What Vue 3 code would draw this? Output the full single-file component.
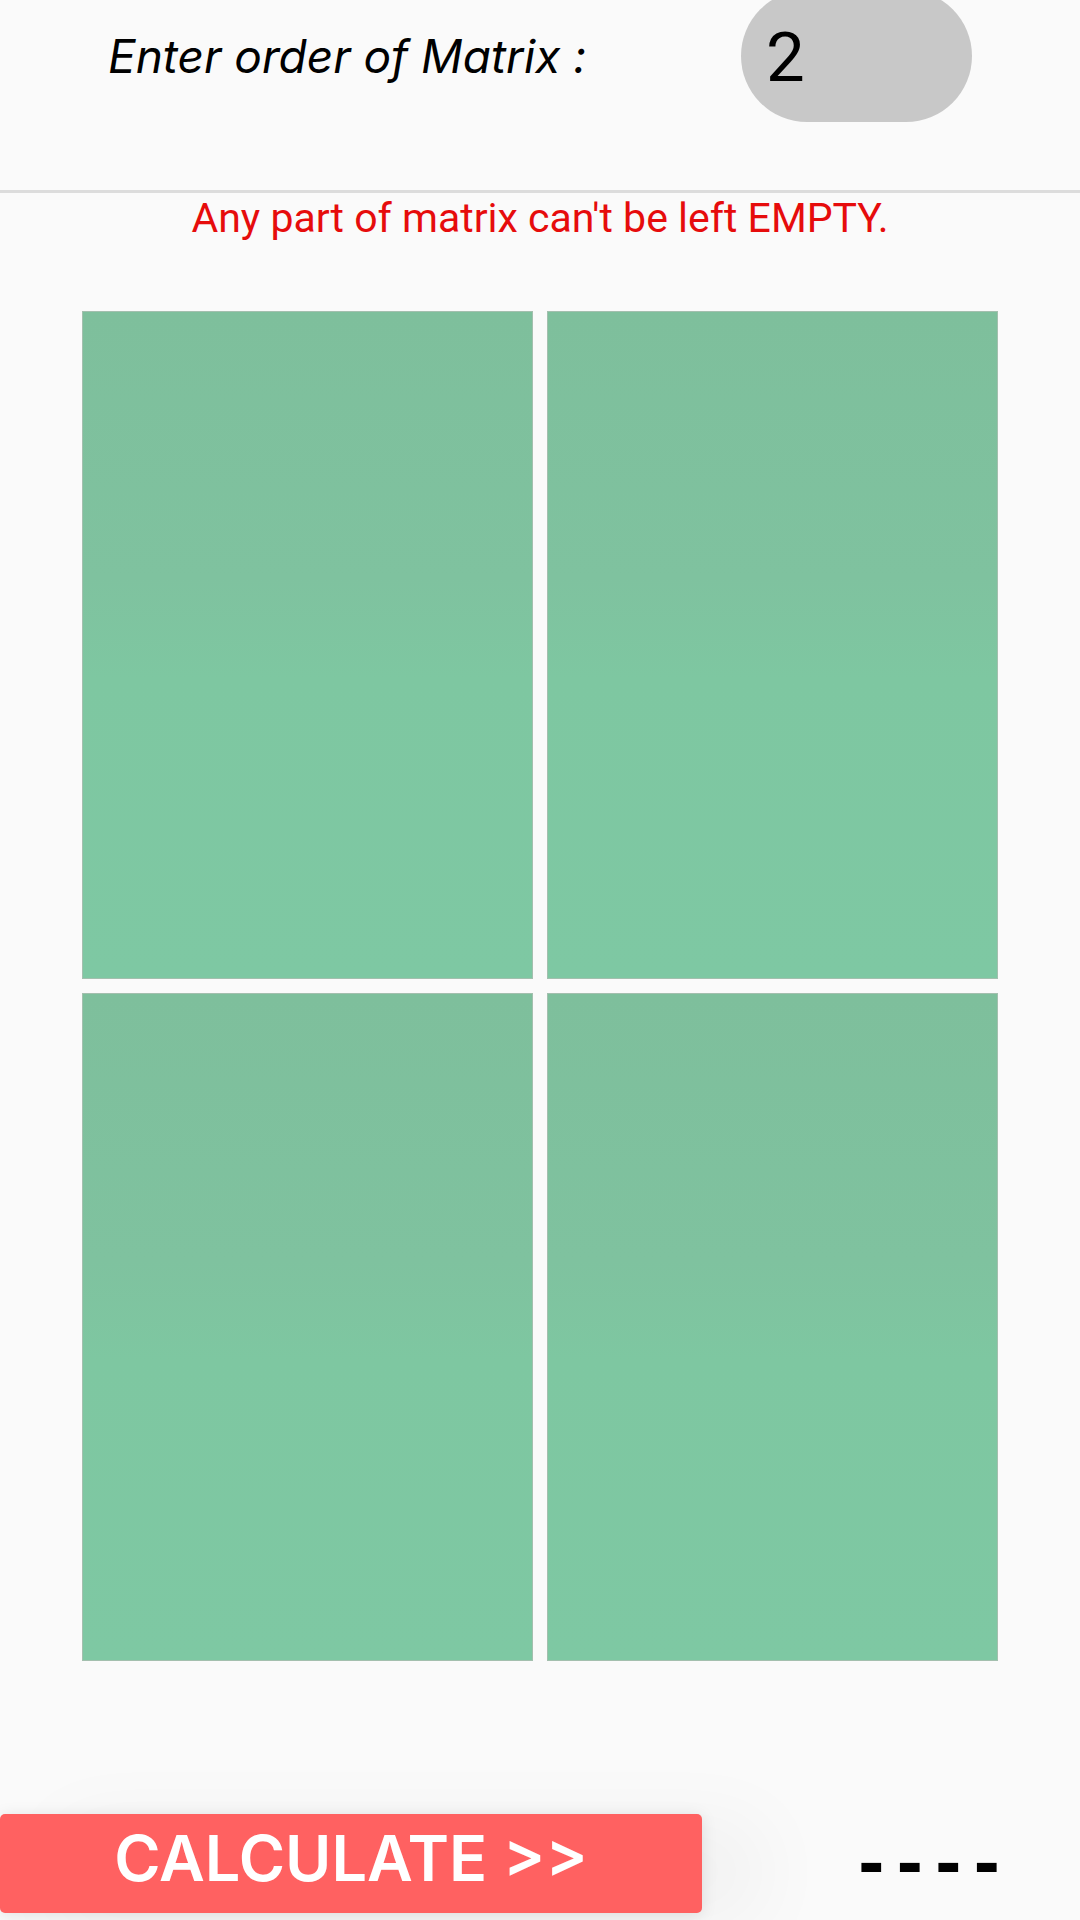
<script setup>
import { ref } from 'vue'

const order = ref('2')
const cells = ref(['', '', '', ''])
const result = ref('----')
</script>

<template>
  <main class="page">
    <header class="order">
      <label class="order-label" for="order">Enter order of Matrix :</label>
      <input id="order" v-model="order" class="order-input" type="text" inputmode="numeric" />
    </header>
    <p class="warning">Any part of matrix can't be left EMPTY.</p>
    <section class="matrix">
      <input
        v-for="(cell, i) in cells"
        :key="i"
        v-model="cells[i]"
        class="cell"
        type="text"
        :aria-label="`Matrix element ${i + 1}`"
      />
    </section>
    <footer class="actions">
      <button class="calculate" type="button">CALCULATE &gt;&gt;</button>
      <output class="result">{{ result }}</output>
    </footer>
  </main>
</template>

<style>
body {
  margin: 0;
  background: #fafafa;
}
</style>

<style scoped>
.page {
  display: flex;
  flex-direction: column;
  box-sizing: border-box;
  min-height: 100vh;
  overflow: hidden;
  background: #fafafa;
  color: #000;
  font-family: Roboto, sans-serif;
}
.order {
  display: flex;
  align-items: center;
  justify-content: space-between;
  margin-top: -10px;
  padding: 0 108px 68px;
  border-bottom: 3px solid #dcdcdc;
}
.order-label {
  font: italic 400 46px/60px Inter, sans-serif;
}
.order-input {
  box-sizing: border-box;
  width: 231px;
  height: 132px;
  padding: 2px 25px 0;
  border: 0;
  border-radius: 66px;
  background: #c8c8c8;
  color: #000;
  font: 400 69px/80px Roboto, sans-serif;
}
.warning {
  margin: 0;
  text-align: center;
  color: #e60c0c;
  font-size: 41px;
  line-height: 50px;
}
.matrix {
  flex: 1;
  display: grid;
  grid-template-columns: 1fr 1fr;
  grid-auto-rows: 1fr;
  gap: 14px;
  padding: 68px 82px 0;
}
.cell {
  box-sizing: border-box;
  width: 100%;
  min-width: 0;
  min-height: 160px;
  padding: 0 24px;
  border: 1px solid #a3bfae;
  border-radius: 0;
  background: linear-gradient(#7ebf9c, #7fc29f 40%, #7ec7a1 55%, #7ec8a3);
  text-align: center;
  font: 400 69px/80px Roboto, sans-serif;
}
.actions {
  display: flex;
  margin-top: 153px;
  padding-bottom: 7px;
}
.calculate {
  flex: 0 0 65%;
  height: 99px;
  padding: 0 0 12px;
  border: 0;
  border-radius: 5px;
  background: #ff6161;
  box-shadow: 0 2px 16px rgba(0, 0, 0, 0.1), 60px 8px 80px rgba(0, 0, 0, 0.04);
  color: #fff;
  font: 600 63px/72px Inter, sans-serif;
}
.result {
  flex: 1;
  position: relative;
  padding-top: 12px;
  padding-left: 76px;
  text-align: center;
  font: 700 64px/76px "DejaVu Sans Mono", monospace;
}
</style>
